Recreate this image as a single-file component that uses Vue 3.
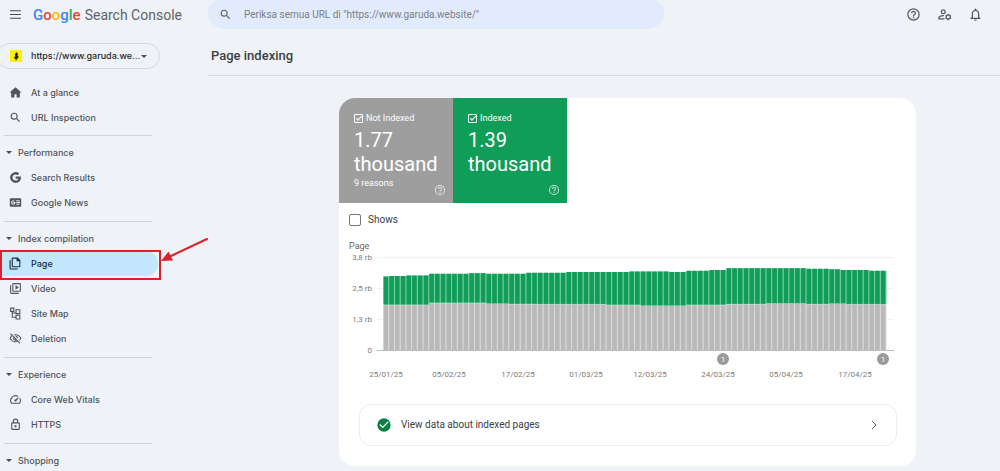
<script setup>
const G = {
  home: 'M10 21v-6h4v6h6v-9h3L12 2.500 1 12h3v9z',
  search: 'M15.5 14h-.79l-.28-.27A6.47 6.47 0 0 0 16 9.5 6.5 6.5 0 1 0 9.5 16c1.61 0 3.09-.59 4.23-1.57l.27.28v.79l5 4.99L20.49 19zm-6 0a4.5 4.5 0 1 1 0-9 4.5 4.5 0 0 1 0 9z',
  google: 'M12.2 10v4.2h5c-.5 2.2-2.400 3.500-5 3.500a5.700 5.700 0 1 1 3.700-10l3-3A10 10 0 1 0 12.200 22c5.800 0 9.800-4 9.800-9.900 0-.7-.1-1.400-.2-2.100z',
  news: 'M3 4h18a1.500 1.500 0 0 1 1.500 1.500v13A1.500 1.500 0 0 1 21 20H3a1.500 1.500 0 0 1-1.500-1.500v-13A1.500 1.500 0 0 1 3 4zm5 7.300v1.700h1.900c-.3.800-1 1.200-1.900 1.200a2.200 2.200 0 1 1 1.400-3.900l1.200-1.200A4 4 0 1 0 8 16c2.300 0 3.900-1.600 3.900-3.900l-.1-.8zM13.500 8v1.600h6V8zm0 3.200v1.600h7v-1.600zm0 3.200V16h6v-1.600z',
  page: 'M3 6H1v15a2 2 0 0 0 2 2h13v-2H3zM16 1H7a2 2 0 0 0-2 2v14a2 2 0 0 0 2 2h12a2 2 0 0 0 2-2V6zm3 16H7V3h7v5h5z',
  video: 'M4 6H2v14a2 2 0 0 0 2 2h14v-2H4zM20 2H8a2 2 0 0 0-2 2v12a2 2 0 0 0 2 2h12a2 2 0 0 0 2-2V4a2 2 0 0 0-2-2zm0 14H8V4h12zM12 5.500v9l6-4.500z',
  sitemap: 'M2 1v8h3v11h7v3h9v-9h-9v4H7v-6h5v1h9V4h-9v6H7V9h3V1zm2 2h4v4H4zm10 3h5v5h-5zm0 10h5v5h-5z',
  removed: 'M12 6a9.800 9.800 0 0 1 8.800 5.500 9.700 9.700 0 0 1-2.400 3.100l1.400 1.400a11.800 11.800 0 0 0 3.200-4.500A11.800 11.800 0 0 0 8.400 4.600L10 6.200c.7-.1 1.300-.2 2-.2zm-1.100 1.100L13 9.200c.6.300 1 .7 1.300 1.300l2.100 2.100c.1-.3.100-.700.100-1.100a4.500 4.500 0 0 0-5.600-4.400zM2 3.900l2.700 2.700A11.800 11.800 0 0 0 1 11.500 11.800 11.800 0 0 0 16.300 18.200l3.400 3.400 1.400-1.400L3.400 2.500zm7.500 7.500 2.600 2.600H12a2.500 2.500 0 0 1-2.500-2.600zM6.100 8l1.800 1.700a4.500 4.500 0 0 0 5.900 5.900l1 1A9.800 9.800 0 0 1 3.200 11.500 9.900 9.900 0 0 1 6.100 8z',
  speed: 'm20.400 8.600-1.200 1.800a8 8 0 0 1-.2 7.600H5.100A8 8 0 0 1 15.600 6.900L17.400 5.600A10 10 0 0 0 3.400 19a2 2 0 0 0 1.700 1H19a2 2 0 0 0 1.700-1 10 10 0 0 0-.3-10.400zm-9.800 6.800a2 2 0 0 0 2.800 0l5.700-8.500-8.500 5.700a2 2 0 0 0 0 2.800z',
  lock: 'M18 8h-1V6A5 5 0 0 0 7 6v2H6a2 2 0 0 0-2 2v10a2 2 0 0 0 2 2h12a2 2 0 0 0 2-2V10a2 2 0 0 0-2-2zM9 6a3 3 0 0 1 6 0v2H9zm9 14H6V10h12zm-6-3a2 2 0 1 0 0-4 2 2 0 0 0 0 4z',
  help: 'M11 18h2v-2h-2zm1-16a10 10 0 1 0 0 20 10 10 0 0 0 0-20zm0 18a8 8 0 1 1 0-16 8 8 0 0 1 0 16zm0-14a4 4 0 0 0-4 4h2a2 2 0 1 1 4 0c0 2-3 1.750-3 5h2c0-2.250 3-2.500 3-5a4 4 0 0 0-4-4z',
  bell: 'M12 22a2 2 0 0 0 2-2h-4a2 2 0 0 0 2 2zm6-6v-5c0-3.100-1.600-5.600-4.500-6.300V4a1.500 1.500 0 0 0-3 0v.7C7.600 5.400 6 7.900 6 11v5l-2 2v1h16v-1zm-2 1H8v-6c0-2.500 1.500-4.500 4-4.500s4 2 4 4.500z',
  check: 'M12 2a10 10 0 1 0 0 20 10 10 0 0 0 0-20zm-2 15-5-5 1.400-1.400 3.600 3.600 7.600-7.600L19 8z'
}

const topLinks = [
  { label: 'At a glance', icon: G.home },
  { label: 'URL Inspection', icon: G.search }
]
const groups = [
  { title: 'Performance', items: [
    { label: 'Search Results', icon: G.google },
    { label: 'Google News', icon: G.news }
  ] },
  { title: 'Index compilation', items: [
    { label: 'Page', icon: G.page, active: true },
    { label: 'Video', icon: G.video },
    { label: 'Site Map', icon: G.sitemap },
    { label: 'Deletion', icon: G.removed }
  ] },
  { title: 'Experience', items: [
    { label: 'Core Web Vitals', icon: G.speed },
    { label: 'HTTPS', icon: G.lock }
  ] },
  { title: 'Shopping', items: [] }
]
const tiles = [
  { id: 'not-indexed', label: 'Not Indexed', value: '1.77 thousand', note: '9 reasons' },
  { id: 'indexed', label: 'Indexed', value: '1.39 thousand', note: '' }
]

// Runs of [number of days, height in chart units]
const expand = runs => runs.flatMap(([n, h]) => Array(n).fill(h))
const totals = expand([[1, 73.5], [3, 74], [4, 74.5], [7, 76.2], [3, 76.8], [7, 76.2], [7, 77.2], [11, 78], [7, 78.5], [3, 78], [4, 79.2], [3, 80], [14, 81.8], [4, 81.2], [2, 80.7], [5, 80], [3, 79.2]])
const excluded = expand([[8, 44.8], [10, 46.7], [4, 46], [5, 45.5], [12, 45.3], [6, 44.7], [8, 44], [7, 44.7], [7, 45.4], [7, 46.1], [4, 45.4], [3, 46], [7, 45.3]])
const base = 110
const pitch = 5.716
const bars = totals.map((t, i) => ({ x: 44.5 + i * pitch, total: t, gray: excluded[i] }))
const yTicks = [
  { y: 17, label: '3,8 rb' },
  { y: 48, label: '2,5 rb' },
  { y: 79, label: '1,3 rb' },
  { y: 110, label: '0' }
]
const dates = [
  { x: 47, label: '25/01/25' }, { x: 110, label: '05/02/25' }, { x: 179, label: '17/02/25' },
  { x: 247, label: '01/03/25' }, { x: 311, label: '12/03/25' }, { x: 379, label: '24/03/25' },
  { x: 447, label: '05/04/25' }, { x: 516, label: '17/04/25' }
]
const markers = [384, 544]
</script>

<template>
  <div class="app">
    <header class="topbar">
      <div class="brand">
        <button class="icon-btn" aria-label="Menu">
          <svg class="menu" viewBox="0 0 24 24"><path d="M2 4h20v2H2zm0 7h20v2H2zm0 7h20v2H2z" /></svg>
        </button>
        <a href="#" class="logo"><b class="blue">G</b><b class="red">o</b><b class="yellow">o</b><b class="blue">g</b><b class="green">l</b><b class="red">e</b><span class="product">Search Console</span></a>
      </div>
      <label class="search">
        <svg class="icon" viewBox="0 0 24 24"><path :d="G.search" /></svg>
        <input type="text" aria-label="URL" placeholder="Periksa semua URL di &quot;https://www.garuda.website/&quot;">
      </label>
      <div class="actions">
        <button class="icon-btn" aria-label="Help"><svg class="big" viewBox="0 0 24 24"><path :d="G.help" /></svg></button>
        <button class="icon-btn" aria-label="User settings">
          <svg class="big line" viewBox="0 0 24 24">
            <circle cx="10" cy="7.500" r="3" />
            <path d="M12 19H3v-1.800c0-2.200 4-3.800 8-3.400" />
            <circle cx="18" cy="16" r="3.300" />
            <path d="M18 11v2M18 19v2M13.700 13.500l1.700 1M20.600 17.500l1.700 1M13.700 18.500l1.700-1M20.600 14.500l1.700-1" />
          </svg>
        </button>
        <button class="icon-btn" aria-label="Notifications"><svg class="big" viewBox="0 0 24 24"><path :d="G.bell" /></svg></button>
      </div>
    </header>

    <div class="body">
      <aside class="sidebar">
        <button class="property">
          <svg class="favicon" viewBox="0 0 12 12"><rect width="12" height="12" fill="#fff200" /><path d="M6.500 2 8.300 4.500 7.400 5.500 8.800 7 6 10.500 4.800 8.500 3.500 8 5.200 6.500 5 4z" fill="#222" /></svg>
          <span>https://www.garuda.we...</span>
          <i class="caret"></i>
        </button>
        <nav>
          <ul class="links">
            <li v-for="l in topLinks" :key="l.label"><a href="#"><svg class="icon" viewBox="0 0 24 24"><path :d="l.icon" /></svg>{{ l.label }}</a></li>
          </ul>
          <section v-for="g in groups" :key="g.title" class="group">
            <button class="group-title"><i class="caret small"></i>{{ g.title }}</button>
            <ul class="links">
              <li v-for="l in g.items" :key="l.label" :class="{ active: l.active }">
                <a href="#"><svg class="icon" viewBox="0 0 24 24"><path fill-rule="evenodd" :d="l.icon" /></svg>{{ l.label }}</a>
                <template v-if="l.active">
                  <span class="frame"></span>
                  <svg class="arrow" viewBox="0 0 48 26"><path d="M46 1 10 18" stroke="#d8232a" stroke-width="2" stroke-linecap="round" /><path d="M0 23 7.500 13.500 12 22.500z" fill="#d8232a" /></svg>
                </template>
              </li>
            </ul>
          </section>
        </nav>
      </aside>

      <main>
        <h1>Page indexing</h1>
        <div class="content">
          <article class="card">
            <div class="tiles">
              <div v-for="t in tiles" :key="t.id" class="tile" :class="t.id">
                <label><input type="checkbox" checked>{{ t.label }}</label>
                <strong>{{ t.value }}</strong>
                <small>{{ t.note }}</small>
                <button class="tile-help" :aria-label="'About ' + t.label"><svg viewBox="0 0 24 24"><path :d="G.help" /></svg></button>
              </div>
            </div>
            <label class="shows"><input type="checkbox">Shows</label>
            <svg class="chart" viewBox="0 0 577 144" role="img" aria-label="Indexed and not indexed pages per day">
              <text x="10" y="9" class="axis-title">Page</text>
              <g v-for="t in yTicks" :key="t.label">
                <path :d="`M38 ${t.y + .5}H555`" :stroke="t.y === base ? '#bdbdbd' : '#f1f1f1'" />
                <text x="33" :y="t.y + 3" text-anchor="end">{{ t.label }}</text>
              </g>
              <g v-for="b in bars" :key="b.x">
                <rect :x="b.x" :y="base - b.total" width="5.716" :height="b.total - b.gray" fill="#7dcda6" />
                <rect :x="b.x" :y="base - b.gray" width="5.716" :height="b.gray" fill="#dcdcdc" />
                <rect :x="b.x" :y="base - b.total" width="4.700" :height="b.total - b.gray - .8" fill="#109d58" />
                <rect :x="b.x" :y="base - b.gray" width="4.700" :height="b.gray" fill="#b9b9b9" />
              </g>
              <g v-for="m in markers" :key="m">
                <circle :cx="m" cy="119" r="6" fill="#9a9a9a" />
                <text :x="m" y="122" text-anchor="middle" class="marker">1</text>
              </g>
              <text v-for="d in dates" :key="d.label" :x="d.x" y="137" text-anchor="middle" class="date">{{ d.label }}</text>
            </svg>
            <a href="#" class="view-data">
              <svg class="ok" viewBox="0 0 24 24"><path :d="G.check" /></svg>
              <span>View data about indexed pages</span>
              <svg class="chevron" viewBox="0 0 12 12"><path d="m4 2 4 4-4 4" /></svg>
            </a>
          </article>
        </div>
      </main>
    </div>
  </div>
</template>

<style>
body { margin: 0; background: #eff3f8; }
</style>

<style scoped>
* { box-sizing: border-box; }
.app { height: 100vh; overflow: hidden; background: #eff3f8; color: #46494d; font: 10px/12px Roboto, "Liberation Sans", sans-serif; }
button { border: 0; padding: 0; background: none; font: inherit; color: inherit; }
a { color: inherit; text-decoration: none; }
ul { list-style: none; margin: 0; padding: 0; }
svg { display: block; flex: none; fill: currentColor; }
.icon { width: 13px; height: 13px; }

.topbar { display: flex; align-items: center; height: 29px; }
.brand { display: flex; align-items: center; gap: 11px; width: 208px; flex: none; padding-left: 9px; }
.menu { width: 13px; height: 13px; }
.logo { display: flex; align-items: center; font-size: 14px; line-height: 28px; white-space: nowrap; }
.logo b { font-size: 15px; font-weight: 500; }
.product { margin-left: 4px; color: #5f6368; }
.blue { color: #4285f4; }
.red { color: #ea4335; }
.yellow { color: #fbbc05; }
.green { color: #34a853; }
.search { display: flex; align-items: center; gap: 12px; width: 456px; height: 29px; padding-left: 11px; border-radius: 12px 12px 16px 16px; background: #e2ebfb; color: #5f6368; }
.search input { flex: 1; min-width: 0; border: 0; padding: 0; outline: 0; background: none; color: #444; font: 10px/14px Roboto, sans-serif; }
.search input::placeholder { color: #7b8088; opacity: 1; }
.actions { display: flex; gap: 16px; margin-left: auto; padding-right: 17px; color: #56595d; }
.big { width: 15px; height: 15px; }
.line { fill: none; stroke: currentColor; stroke-width: 2; }

.body { display: flex; }
.sidebar { width: 208px; flex: none; padding-top: 14px; font-family: Inter, Roboto, sans-serif; font-size: 9px; }
.property { display: flex; align-items: center; width: 163px; height: 26px; margin-left: -3px; padding-left: 12px; border: 1px solid #d3d7dc; border-radius: 13px; color: #26282b; font-weight: 500; white-space: nowrap; }
.favicon { width: 12px; height: 12px; margin-right: 9px; }
.caret { margin-left: auto; margin-right: 12px; border: 3px solid transparent; border-top-color: #4a4d51; border-bottom: 0; }
.caret.small { margin: 0 6px 0 0; }
nav { padding-top: 11px; }
.links li { position: relative; height: 25px; }
.links a { display: flex; align-items: center; gap: 9px; width: 158px; height: 25px; padding-left: 9px; font-weight: 500; color: #515458; }
.links .active a { background: #c2e7ff; border-radius: 0 12px 12px 0; color: #1c2b3a; }
nav > .links { padding-bottom: 5px; }
.group { position: relative; padding: 5px 0 6px; }
.group::before { content: ""; position: absolute; top: 0; left: 4px; width: 148px; height: 1px; background: #ced2da; }
.group-title { display: flex; align-items: center; height: 25px; padding-left: 6px; font-weight: 500; color: #515458; }
.frame { position: absolute; left: 0; top: -1px; width: 161px; height: 30px; border: 2px solid #d8232a; }
.arrow { position: absolute; left: 161px; top: -13px; width: 48px; height: 26px; fill: none; }

main { flex: 1; min-width: 0; }
h1 { margin: 0; height: 47px; padding: 18px 0 0 3px; border-bottom: 1px solid #d9dce1; color: #3c4043; font-size: 13px; line-height: 18px; font-weight: 500; }
.content { padding: 22px 84px 5px 131px; }
.card { overflow: hidden; border-radius: 16px; background: #fff; padding-bottom: 20px; }
.tiles { display: flex; }
.tile { position: relative; width: 114px; height: 105px; padding: 14px 0 0 15px; color: #fff; }
.not-indexed { background: #9e9e9e; }
.indexed { background: #109d58; }
.tile label { display: flex; align-items: center; gap: 3px; font-size: 9px; font-weight: 400; line-height: 12px; }
.tile input { appearance: none; width: 9px; height: 9px; margin: 0; border: 1px solid #fff; border-radius: 1px; display: grid; place-items: center; }
.tile input:checked::after { content: ""; width: 5px; height: 2px; margin-bottom: 2px; border-left: 1px solid #fff; border-bottom: 1px solid #fff; rotate: -45deg; }
.tile strong { display: block; margin-top: 4px; font-size: 20px; line-height: 24px; font-weight: 400; }
.tile small { display: block; margin-top: 1px; font-size: 9px; line-height: 12px; }
.tile-help { position: absolute; right: 7px; bottom: 7px; opacity: .75; }
.tile-help svg { width: 12px; height: 12px; }
.shows { display: flex; align-items: center; gap: 7px; margin: 10px; height: 14px; color: #3c4043; }
.shows input { appearance: none; width: 12px; height: 12px; margin: 0; border: 1px solid #777; border-radius: 2px; background: #fff; }
.chart { width: 100%; height: auto; margin-top: 13px; }
.chart text { fill: #7b7b7b; font-size: 8px; }
.chart .axis-title { fill: #666; font-size: 9px; }
.chart .marker { fill: #fff; font-size: 8px; }
.view-data { display: flex; align-items: center; height: 42px; margin: 20px 19px 0 20px; padding: 0 16px; border: 1px solid #ececec; border-radius: 12px; color: #3c4043; }
.ok { width: 16px; height: 16px; margin-right: 9px; fill: #0b8043; }
.chevron { width: 12px; height: 12px; margin-left: auto; fill: none; stroke: #5f6368; stroke-width: 1px; }
</style>
